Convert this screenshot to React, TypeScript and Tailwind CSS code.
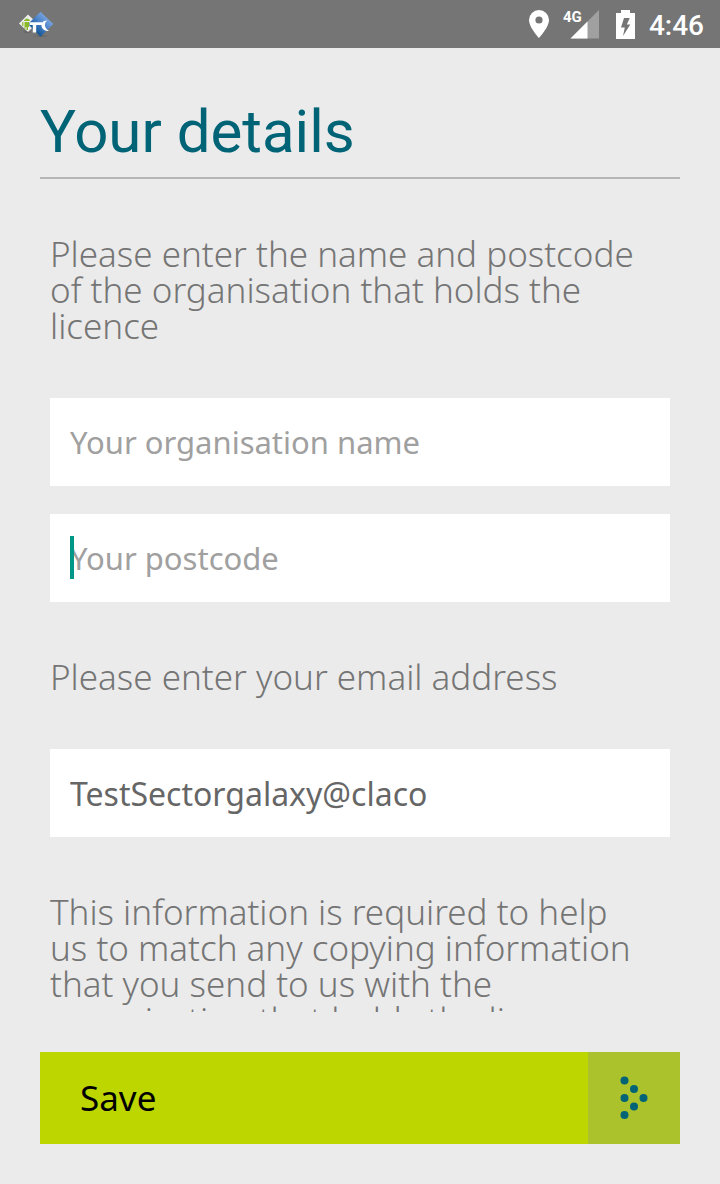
import { useState } from "react";

const bodyFont = "font-['Noto_Sans','Open_Sans',sans-serif]";

function AppLogo() {
  return (
    <svg viewBox="0 0 36 28" className="h-7 w-9" aria-hidden="true">
      <defs>
        <linearGradient id="logoBlue" x1="0" y1="1" x2="1" y2="0">
          <stop offset="0.2" stopColor="#0b4f8c" />
          <stop offset="0.55" stopColor="#4f86cc" />
          <stop offset="1" stopColor="#a3c4ee" />
        </linearGradient>
        <radialGradient id="logoShade">
          <stop offset="0" stopColor="#555" />
          <stop offset="1" stopColor="#777" stopOpacity="0" />
        </radialGradient>
      </defs>
      <ellipse cx="23" cy="26" rx="12" ry="1.500" fill="url(#logoShade)" />
      <ellipse cx="9" cy="22" rx="7" ry="2" fill="url(#logoShade)" />
      <path d="M10 4.500 19 13 10 22 1 13.500Z" fill="#ececea" />
      <path d="M22.500 1.700 35.300 14 22.500 26.700 10 14Z" fill="url(#logoBlue)" />
      <path d="M6 10.500Q9 6.500 12 10.500V11H6ZM6.500 12H11V17H10V20H8.500V17H7.500V19H6.500ZM4.200 12H5.400V16H4.200Z" fill="#8ab929" />
      <path d="M11.500 12.300H24V15H18.200V22.500H14.800V15H11.500Z" fill="#fff" />
      <path d="M29.500 10.500C24 10.500 22.500 14 24 17.500C25 20 27.500 21.300 31 21C28 19 26.500 16.500 27 14C27.300 12.500 28.200 11.500 29.500 10.500Z" fill="#fff" />
    </svg>
  );
}

function StatusBar() {
  return (
    <header className="flex h-12 shrink-0 items-center justify-between bg-[#757575] pr-4 pl-[18px] font-['Roboto',sans-serif] text-white">
      <AppLogo />
      <div className="flex items-center">
        <svg viewBox="0 0 20 28" className="h-7 w-5" aria-label="Location">
          <path
            fillRule="evenodd"
            fill="#fff"
            d="M10 0A10 10 0 0 0 0 10C0 17.300 10 28 10 28S20 17.300 20 10A10 10 0 0 0 10 0ZM10 6.400A3.600 3.600 0 1 1 10 13.600A3.600 3.600 0 0 1 10 6.400Z"
          />
        </svg>
        <svg viewBox="0 0 36 30" className="ml-[14px] h-[30px] w-9" aria-label="Mobile signal">
          <path d="M36 1V29.500H7.500Z" fill="#a0a0a0" />
          <path d="M24.500 12.500V29.500H7.500Z" fill="#fff" />
          <path d="M0 0H19V14H0Z" fill="#757575" />
          <text x="0" y="13" fill="#fff" fontSize="15" fontWeight="700">
            4G
          </text>
        </svg>
        <svg viewBox="0 0 19 29" className="ml-[17px] h-[29px] w-[19px]" aria-label="Battery charging">
          <path
            fillRule="evenodd"
            fill="#fff"
            d="M5 0H14V3H19V29H0V3H5ZM8 8L5 17.500H8.800L7 26L14.300 14.500H10.800L13.800 8Z"
          />
        </svg>
        <span className="ml-[14px] pt-[3px] text-[28px] leading-8 font-medium">4:46</span>
      </div>
    </header>
  );
}

const fieldClass =
  "block h-[88px] w-full rounded-none bg-white px-5 text-[#666666] outline-none placeholder:text-[#a0a0a0]";
const copyClass = "pr-5 text-[35px] leading-9 font-light text-[#757575]";

export default function App() {
  const [organisation, setOrganisation] = useState("");
  const [postcode, setPostcode] = useState("");
  const [email, setEmail] = useState("TestSectorgalaxy@claco");

  return (
    <div className={`flex h-screen flex-col bg-[#ebebeb] ${bodyFont}`}>
      <StatusBar />
      <form
        className="flex min-h-0 flex-1 flex-col px-10 pb-10"
        onSubmit={(event) => event.preventDefault()}
      >
        <h1 className="shrink-0 border-b-2 border-[#b5b5b5] pt-[49px] pb-[10px] font-['Roboto',sans-serif] text-[60px] leading-[70px] text-[#006476]">
          Your details
        </h1>
        <div className="min-h-0 flex-1 overflow-y-auto px-[10px] pt-[57px] [scrollbar-width:none]">
          <p className={copyClass}>
            Please enter the name and postcode of the organisation that holds the licence
          </p>
          <input
            aria-label="Your organisation name"
            className={`mt-[54px] text-[31px] ${fieldClass}`}
            placeholder="Your organisation name"
            value={organisation}
            onChange={(event) => setOrganisation(event.target.value)}
          />
          <div className="relative mt-7">
            <input
              aria-label="Your postcode"
              className={`text-[31px] caret-transparent ${fieldClass}`}
              placeholder="Your postcode"
              value={postcode}
              onChange={(event) => setPostcode(event.target.value)}
            />
            {postcode === "" && (
              <span className="pointer-events-none absolute top-[22px] left-5 h-[43px] w-1 bg-[#009688]" />
            )}
          </div>
          <label htmlFor="email" className={`mt-[57px] block ${copyClass}`}>
            Please enter your email address
          </label>
          <input
            id="email"
            className={`mt-[54px] text-[32px] ${fieldClass}`}
            value={email}
            onChange={(event) => setEmail(event.target.value)}
          />
          <p className={`mt-[57px] ${copyClass}`}>
            This information is required to help us to match any copying information that you send
            to us with the organisation that holds the licence
          </p>
        </div>
        <button
          type="submit"
          className="mt-10 flex h-[92px] shrink-0 items-stretch justify-between bg-[#bed600] text-[35px] text-black"
        >
          <span className="self-center pl-10">Save</span>
          <span className="flex w-[92px] items-center justify-center bg-[#abc22c]">
            <svg viewBox="0 0 28 44" className="h-11 w-7" fill="#006476" aria-hidden="true">
              <circle cx="4.500" cy="4.500" r="4" />
              <circle cx="14" cy="13" r="4" />
              <circle cx="4.500" cy="22" r="4" />
              <circle cx="23.500" cy="22" r="4" />
              <circle cx="14" cy="30.500" r="4" />
              <circle cx="4.500" cy="39" r="4" />
            </svg>
          </span>
        </button>
      </form>
    </div>
  );
}
